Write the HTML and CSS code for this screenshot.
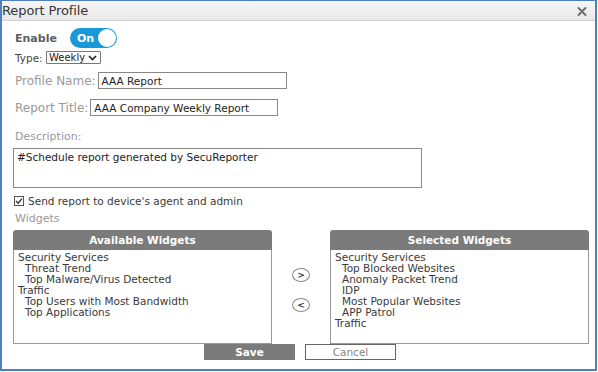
FILE: index.html
```html
<!DOCTYPE html>
<html>
<head>
<meta charset="utf-8">
<link rel="stylesheet" href="styles.css">
</head>
<body>
<div class="dialog">
  <div class="titlebar">
    <span class="title">Report Profile</span>
    <svg class="close" width="10" height="9" viewBox="0 0 10 9"><path d="M1.5 1 L8.5 8 M8.5 1 L1.5 8" stroke="#6a6a6a" stroke-width="1.8" stroke-linecap="round"/></svg>
  </div>
  <div class="content">
    <div class="row enable-row">
      <span class="enable-label">Enable</span>
      <div class="toggle"><span class="toggle-text">On</span><span class="knob"></span></div>
    </div>
    <div class="row type-row">
      <span class="type-label">Type:</span>
      <div class="select"><span>Weekly</span><svg width="9" height="6" viewBox="0 0 9 6"><path d="M1 1 L4.5 4.5 L8 1" fill="none" stroke="#222" stroke-width="1.6"/></svg></div>
    </div>
    <div class="row field-row name-row">
      <span class="field-label">Profile Name:</span>
      <div class="input name-input">AAA Report</div>
    </div>
    <div class="row field-row title-row">
      <span class="field-label">Report Title:</span>
      <div class="input title-input">AAA Company Weekly Report</div>
    </div>
    <div class="desc-label">Description:</div>
    <div class="textarea">#Schedule report generated by SecuReporter</div>
    <div class="row check-row">
      <svg class="checkbox" width="10" height="10" viewBox="0 0 10 10"><rect x="0.5" y="0.5" width="9" height="9" fill="#fff" stroke="#555"/><path d="M2 5 L4.2 7.2 L8 2.6" fill="none" stroke="#333" stroke-width="1.4"/></svg>
      <span class="check-text">Send report to device's agent and admin</span>
    </div>
    <div class="widgets-label">Widgets</div>
    <div class="widgets">
      <div class="panel">
        <div class="panel-head">Available Widgets</div>
        <div class="panel-body">
          <div class="group">Security Services</div>
          <div class="item">Threat Trend</div>
          <div class="item">Top Malware/Virus Detected</div>
          <div class="group">Traffic</div>
          <div class="item">Top Users with Most Bandwidth</div>
          <div class="item">Top Applications</div>
        </div>
      </div>
      <div class="arrows">
        <div class="arrow">&gt;</div>
        <div class="arrow">&lt;</div>
      </div>
      <div class="panel">
        <div class="panel-head">Selected Widgets</div>
        <div class="panel-body">
          <div class="group">Security Services</div>
          <div class="item">Top Blocked Websites</div>
          <div class="item">Anomaly Packet Trend</div>
          <div class="item">IDP</div>
          <div class="item">Most Popular Websites</div>
          <div class="item">APP Patrol</div>
          <div class="group">Traffic</div>
        </div>
      </div>
    </div>
    <div class="buttons">
      <div class="btn save">Save</div>
      <div class="btn cancel">Cancel</div>
    </div>
  </div>
</div>
</body>
</html>
```
FILE: styles.css
```css
html, body { margin: 0; padding: 0; background: #fff; }
body { font-family: "DejaVu Sans", "Liberation Sans", sans-serif; font-size: 10.5px; color: #3a3a3a; }
.dialog {
  width: 597px; height: 371px; box-sizing: border-box;
  border: 2px solid #4d80c2; border-top-width: 1px;
  background: #fff; overflow: hidden;
}
.titlebar {
  height: 19px; border-bottom: 1px solid #d2d2d2;
  background: linear-gradient(#f8f7f7, #e9e8e8);
  display: flex; align-items: center; justify-content: space-between;
  padding: 0 8px 0 0;
}
.title { font-size: 13px; color: #333; letter-spacing: -0.1px; }
.close { margin-top: 1px; }
.content { padding-left: 11px; }
.row { display: flex; align-items: center; }
.enable-row { margin-top: 7px; height: 20px; }
.enable-label { width: 57px; padding-left: 2px; box-sizing: border-box; font-size: 11px; font-weight: bold; color: #5e5e5e; }
.toggle {
  width: 47px; height: 20px; border-radius: 10px; background: #1b98d8;
  display: flex; align-items: center; justify-content: space-between; box-sizing: border-box; padding: 0 1px 0 7px;
}
.toggle-text { color: #fff; font-weight: bold; font-size: 11px; }
.knob { width: 18px; height: 18px; border-radius: 50%; background: #fff; }
.type-row { margin-top: 3px; height: 13px; }
.type-label { padding-left: 2px; width: 33px; box-sizing: border-box; color: #444; font-size: 10.5px; }
.select {
  width: 55px; height: 13px; box-sizing: border-box; border: 1px solid #777; border-radius: 1px;
  display: flex; align-items: center; justify-content: space-between; padding: 0 3px 0 2px; color: #222; font-size: 10px;
}
.field-row { height: 17px; }
.name-row { margin-top: 8px; }
.title-row { margin-top: 10px; }
.field-label { padding-left: 2px; color: #999; font-size: 12px; margin-right: 2px; }
.input {
  height: 17px; box-sizing: border-box; border: 1px solid #888; padding: 0 3px;
  display: flex; align-items: center; color: #222; font-size: 10.5px;
}
.name-input { width: 189px; }
.title-input { width: 188px; }
.desc-label { margin-top: 14px; padding-left: 2px; color: #999; font-size: 11px; height: 14px; line-height: 14px; }
.textarea {
  margin-top: 4px; width: 409px; height: 40px; box-sizing: border-box; border: 1px solid #888;
  padding: 2px 3px; color: #222; font-size: 10.5px;
}
.check-row { margin-top: 7px; height: 12px; }
.checkbox { margin-left: 1px; margin-right: 4px; }
.check-text { color: #3a3a3a; font-size: 10.5px; }
.widgets-label { margin-top: 5px; padding-left: 2px; color: #999; font-size: 11px; height: 14px; line-height: 14px; }
.widgets { margin-top: 4px; display: flex; align-items: flex-start; }
.panel { width: 259px; }
.panel-head {
  height: 20px; background: #7b7b7b; border-radius: 3px 3px 0 0;
  color: #fff; font-weight: bold; text-align: center; line-height: 20px; font-size: 10.5px;
}
.panel-body {
  height: 94px; border: 1px solid #999; border-top: none; box-sizing: border-box;
  padding: 2px 0 0 4px; line-height: 11px;
}
.group { color: #3a3a3a; }
.item { padding-left: 7px; color: #3a3a3a; }
.arrows { width: 58px; display: flex; flex-direction: column; align-items: center; padding-top: 38px; gap: 16px; }
.arrow {
  width: 16px; height: 12px; border: 1px solid #888; border-radius: 50%;
  font-size: 9px; line-height: 12px; text-align: center; color: #333; font-weight: bold;
}
.buttons { display: flex; padding-left: 191px; gap: 10px; }
.btn { width: 91px; height: 16px; box-sizing: border-box; text-align: center; line-height: 16px; font-size: 10.5px; }
.save { background: #7b7b7b; color: #fff; font-weight: bold; }
.cancel { border: 1px solid #666; color: #888; line-height: 14px; }
```
